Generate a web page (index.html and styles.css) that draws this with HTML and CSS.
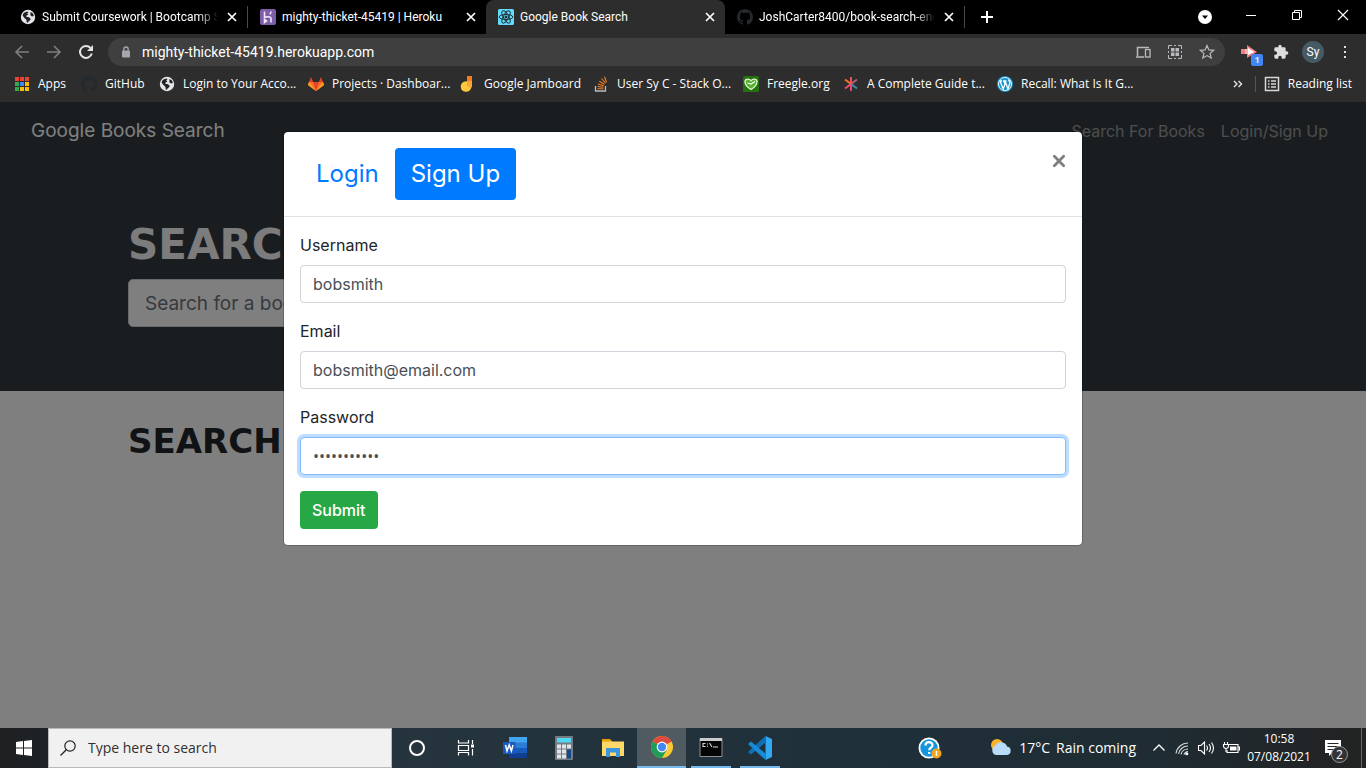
FILE: index.html
```html
<!DOCTYPE html>
<html lang="en">
<head>
<meta charset="utf-8">
<title>Google Book Search</title>
<meta name="viewport" content="width=device-width, initial-scale=1">
<link rel="stylesheet" href="styles.css">
</head>
<body>
<svg class="defs" aria-hidden="true">
  <symbol id="globe" viewBox="0 0 16 16"><circle cx="8" cy="8" r="7.2" fill="#e3e5e8"/><path d="M3.400 4.400C5 3 7 2.600 8.600 3L7.200 4.600l1.200 1-1.800 1-.4 1.200 2.800.4 1.800 1.800-1.200 1.800-1.200.6-.4 1.400-1.200-.4-.4-2.600-2-1.800-1.800-2.400z" fill="#202124"/><path d="M10.500 3l2.500 1.600.8 2.400-1.800.6-1.600-1.400z" fill="#202124"/></symbol>
  <symbol id="github" viewBox="0 0 16 16"><path fill="currentColor" d="M8 0C3.580 0 0 3.580 0 8c0 3.540 2.290 6.530 5.470 7.590.4.070.55-.17.55-.38 0-.19-.01-.82-.01-1.490-2.010.37-2.530-.49-2.690-.94-.09-.23-.48-.94-.82-1.130-.28-.15-.68-.52-.01-.53.63-.01 1.080.58 1.230.82.72 1.210 1.870.87 2.330.66.070-.52.28-.87.51-1.070-1.780-.2-3.640-.89-3.640-3.950 0-.87.31-1.590.82-2.150-.08-.2-.36-1.020.08-2.120 0 0 .67-.21 2.200.82a7.600 7.600 0 0 1 4 0c1.530-1.040 2.200-.82 2.200-.82.44 1.100.16 1.920.08 2.120.51.56.82 1.270.82 2.150 0 3.070-1.870 3.750-3.650 3.950.29.25.54.73.54 1.480 0 1.070-.01 1.930-.01 2.200 0 .21.15.46.55.38A8 8 0 0 0 16 8c0-4.420-3.580-8-8-8z"/></symbol>
  <symbol id="cross" viewBox="0 0 16 16"><path d="M4 4l8 8M12 4l-8 8" stroke="currentColor" stroke-width="1.700" fill="none"/></symbol>
</svg>

<header class="tabs">
  <div class="tab">
    <svg class="ico16"><use href="#globe"/></svg>
    <span class="tab-title">Submit Coursework | Bootcamp S</span>
    <button class="tab-close" aria-label="Close tab"><svg class="ico16"><use href="#cross"/></svg></button>
  </div>
  <div class="tab ruled">
    <svg class="ico16" viewBox="0 0 16 16"><rect width="16" height="16" rx="2" fill="#7d5ca8"/><path d="M4.500 2.500v6c2-1 6.500-1.500 6.500 1v4M4.500 10.500v3l2-1.500zM11 2.500c0 1.300-.5 2-1.200 2.800" fill="none" stroke="#efe6fa" stroke-width="1.600"/></svg>
    <span class="tab-title plain">mighty-thicket-45419 | Heroku</span>
    <button class="tab-close" aria-label="Close tab"><svg class="ico16"><use href="#cross"/></svg></button>
  </div>
  <div class="tab active">
    <svg class="ico16" viewBox="0 0 16 16"><rect width="16" height="16" rx="1.500" fill="#61dafb"/><g fill="none" stroke="#20343c" stroke-width="1"><ellipse cx="8" cy="8" rx="6.800" ry="2.600"/><ellipse cx="8" cy="8" rx="6.800" ry="2.600" transform="rotate(60 8 8)"/><ellipse cx="8" cy="8" rx="6.800" ry="2.600" transform="rotate(120 8 8)"/></g><circle cx="8" cy="8" r="1.500" fill="#20343c"/></svg>
    <span class="tab-title plain">Google Book Search</span>
    <button class="tab-close" aria-label="Close tab"><svg class="ico16"><use href="#cross"/></svg></button>
  </div>
  <div class="tab">
    <svg class="ico16 octo"><use href="#github"/></svg>
    <span class="tab-title">JoshCarter8400/book-search-eng</span>
    <button class="tab-close" aria-label="Close tab"><svg class="ico16"><use href="#cross"/></svg></button>
  </div>
  <button class="new-tab" aria-label="New tab"><svg class="ico16" viewBox="0 0 16 16"><path d="M8 2v12M2 8h12" stroke="#fff" stroke-width="2"/></svg></button>
  <div class="window-controls">
    <button aria-label="Search tabs"><svg class="ico16" viewBox="0 0 16 16"><circle cx="8" cy="8" r="7" fill="#fff"/><path d="M5 6.500h6L8 10z" fill="#000"/></svg></button>
    <button aria-label="Minimise"><svg class="ico16" viewBox="0 0 16 16"><path d="M3 6.500h10" stroke="#fff"/></svg></button>
    <button aria-label="Restore"><svg class="ico16" viewBox="0 0 16 16"><path d="M3.500 3.500h7v7h-7zM5.500 3.500v-2h7v7h-2" fill="none" stroke="#fff"/></svg></button>
    <button aria-label="Close"><svg class="ico16" viewBox="0 0 16 16"><path d="M3 1l10 10M13 1L3 11" stroke="#fff" stroke-width="1.200"/></svg></button>
  </div>
</header>

<div class="toolbar">
  <button class="tool dim" aria-label="Back"><svg class="ico16" viewBox="0 0 16 16"><path d="M15 8H2M8 2L2 8l6 6" fill="none" stroke="currentColor" stroke-width="1.600"/></svg></button>
  <button class="tool dim" aria-label="Forward"><svg class="ico16" viewBox="0 0 16 16"><path d="M1 8h13M8 2l6 6-6 6" fill="none" stroke="currentColor" stroke-width="1.600"/></svg></button>
  <button class="tool" aria-label="Reload"><svg class="ico16" viewBox="0 0 16 16"><path d="M13.800 9.500A6 6 0 1 1 12.500 3.900" fill="none" stroke="currentColor" stroke-width="2"/><path d="M15 1v6H9z" fill="currentColor"/></svg></button>
  <div class="omnibox">
    <svg class="lock" viewBox="0 0 10 12"><rect x="1" y="4.500" width="8" height="7" rx="1" fill="#a4a7ab"/><path d="M2.800 5V3.200a2.200 2.200 0 0 1 4.400 0V5" fill="none" stroke="#a4a7ab" stroke-width="1.300"/></svg>
    <input class="address" type="text" aria-label="Address" value="mighty-thicket-45419.herokuapp.com">
    <svg class="ico16" viewBox="0 0 16 16"><path d="M2.500 12V3.500H14M1 13h8" fill="none" stroke="#b8babd" stroke-width="1.500"/><rect x="10.500" y="5.500" width="4.500" height="7.500" fill="none" stroke="#b8babd" stroke-width="1.300"/></svg>
    <svg class="ico16" viewBox="0 0 16 16"><path d="M1.500 5V1.500H5M11 1.500h3.500V5M14.500 11v3.500H11M5 14.500H1.500V11M7 1.500h2M7 14.500h2M1.500 7v2M14.500 7v2" fill="none" stroke="#b8babd"/><path d="M4 4h3.500v3.500H4zM8.500 4H12v3.500H8.500zM4 8.500h3.500V12H4zM8.500 8.500H12V12H8.500z" fill="#b8babd"/></svg>
    <svg class="ico16" viewBox="0 0 16 16"><path d="M8 1.500l1.900 4.400 4.800.4-3.600 3.100 1.100 4.700L8 11.600l-4.200 2.500 1.100-4.700-3.600-3.100 4.800-.4z" fill="none" stroke="#b8babd" stroke-width="1.200"/></svg>
  </div>
  <button class="tool ext" aria-label="Extension, 1 notification"><svg class="ico16" viewBox="0 0 16 16"><path d="M0 5h6V1l10 7-10 6v-4H0z" fill="#f47f83"/><path d="M7 4l6.500 4L7 11z" fill="#fff"/><path d="M4 5h3v5H4z" fill="#f5b3b5"/></svg><span class="badge">1</span></button>
  <button class="tool" aria-label="Extensions"><svg class="ico16" viewBox="0 0 24 24"><path fill="#dcdee0" d="M20.500 11H19V7a2 2 0 0 0-2-2h-4V3.500a2.500 2.500 0 0 0-5 0V5H4a2 2 0 0 0-2 2v3.800h1.500a2.700 2.700 0 0 1 0 5.400H2V20c0 1.100.9 2 2 2h3.800v-1.500a2.700 2.700 0 0 1 5.400 0V22H17a2 2 0 0 0 2-2v-4h1.500a2.500 2.500 0 0 0 0-5z"/></svg></button>
  <button class="avatar">Sy</button>
  <button class="tool" aria-label="Menu"><svg class="ico16" viewBox="0 0 16 16"><path d="M7 2h2v2H7zM7 7h2v2H7zM7 12h2v2H7z" fill="#e0e2e4"/></svg></button>
</div>

<nav class="bookmarks" aria-label="Bookmarks">
  <a href="#"><svg class="ico16" viewBox="0 0 16 16"><path fill="#ea4335" d="M1 1h4v4H1zM6 1h4v4H6zM11 1h4v4h-4z"/><path fill="#34a853" d="M1 6h4v4H1zM1 11h4v4H1z"/><path fill="#4285f4" d="M6 6h4v4H6z"/><path fill="#fbbc04" d="M11 6h4v4h-4zM6 11h4v4H6zM11 11h4v4h-4z"/><path d="M5.500 0v16M10.500 0v16M0 5.500h16M0 10.500h16" stroke="#2d2d2d"/></svg>Apps</a>
  <a href="#"><svg class="ico16 octo"><use href="#github"/></svg>GitHub</a>
  <a href="#"><svg class="ico16"><use href="#globe"/></svg>Login to Your Acco...</a>
  <a href="#"><svg class="ico16" viewBox="0 0 16 16"><path fill="#fc6d26" d="M8 15L0 9l1-3h14l1 3z"/><path fill="#e24329" d="M1 6l2-5 2.200 5zM15 6l-2-5-2.200 5zM5.200 6h5.600L8 15z"/><path fill="#fca326" d="M1 6L0 9l8 6zM15 6l1 3-8 6z"/></svg>Projects · Dashboar...</a>
  <a href="#"><svg class="ico16" viewBox="0 0 16 16"><circle cx="6" cy="10.500" r="5.300" fill="#fdc93b"/><path d="M7 0h5v10H7z" fill="#f57c20"/><path d="M7 5h5v5c0 1-.5 1.500-1 2L7 10z" fill="#fba43a"/></svg>Google Jamboard</a>
  <a href="#"><svg class="ico16" viewBox="0 0 16 16"><path d="M2.500 10v5h10v-5" fill="none" stroke="#bcbbbb" stroke-width="1.300"/><path d="M4.500 12.800h6M4.500 10.500l6 .7M5 8l5.800 1.700M6.300 5.200l5.200 3M8.500 2.500l4 4.500M11.500.8l2 5.500" stroke="#f48024" stroke-width="1.100"/></svg>User Sy C - Stack O...</a>
  <a href="#"><svg class="ico16" viewBox="0 0 16 16"><rect width="16" height="16" rx="1.500" fill="#27700f"/><path d="M8 13.500C4 11 2 8.500 2 5.700 2 2.800 6 2 8 4.700c2-2.700 6-1.900 6 1 0 2.800-2 5.300-6 7.800z" fill="#54b22d" stroke="#dff5d5" stroke-width="1.300"/><path d="M4.500 7l3.500 1 4-2.500" fill="none" stroke="#fff" stroke-width="1.200"/></svg>Freegle.org</a>
  <a href="#"><svg class="ico16" viewBox="0 0 16 16"><g fill="none" stroke-width="2"><path d="M8 8L2 3.500" stroke="#f4722b"/><path d="M8 8V1" stroke="#ef5350"/><path d="M8 8l6-4.500" stroke="#b65f7c"/><path d="M8 8l6 4.500" stroke="#3f8aa6"/><path d="M8 8v7" stroke="#e04c6c"/><path d="M8 8l-6 4.500" stroke="#e8506a"/></g></svg>A Complete Guide t...</a>
  <a href="#"><svg class="ico16" viewBox="0 0 16 16"><circle cx="8" cy="8" r="8" fill="#1793c9"/><circle cx="8" cy="8" r="6.500" fill="none" stroke="#e8f6fc" stroke-width="1"/><path d="M3 5l3.200 8L8 8 6.800 5M8 5l3 8 2-6.500c0-1.500-1.500-1.500-1.500-3M2.500 5H5M6 5h3.500" fill="none" stroke="#fff" stroke-width="1.300"/></svg>Recall: What Is It G...</a>
  <button class="more" aria-label="More bookmarks"><svg viewBox="0 0 10 10" class="ico10"><path d="M1 2l3 3-3 3M5.500 2l3 3-3 3" fill="none" stroke="#e4e6e8" stroke-width="1.400"/></svg></button>
  <a class="reading" href="#"><svg class="ico16" viewBox="0 0 16 16"><rect x="1.500" y="1.500" width="13" height="13" fill="none" stroke="#d6d8da" stroke-width="1.500"/><path d="M4 5h1.500M4 8h1.500M4 11h1.500M7 5h5M7 8h5M7 11h5" stroke="#d6d8da" stroke-width="1.400"/></svg>Reading list</a>
</nav>

<main class="viewport">
  <div class="site">
    <nav class="navbar">
      <a class="brand" href="#">Google Books Search</a>
      <div class="nav-links"><a href="#">Search For Books</a><a href="#">Login/Sign Up</a></div>
    </nav>
    <section class="hero">
      <div class="container">
        <h1>SEARCH</h1>
        <input class="book-search" type="text" aria-label="Search for a book" placeholder="Search for a book">
      </div>
    </section>
    <section class="container results"><h2>SEARCH</h2></section>
  </div>
  <div class="backdrop">
    <div class="modal" role="dialog" aria-modal="true" aria-label="Sign Up">
      <div class="modal-header">
        <div class="pills"><a href="#">Login</a><a class="selected" href="#">Sign Up</a></div>
        <button class="close" aria-label="Close"><svg viewBox="0 0 12 12"><path d="M2 2l8 8M10 2l-8 8" stroke="#7f7f7f" stroke-width="2.400" stroke-linecap="round"/></svg></button>
      </div>
      <form class="modal-body">
        <div class="field"><label for="username">Username</label><input id="username" type="text" value="bobsmith"></div>
        <div class="field"><label for="email">Email</label><input id="email" type="email" value="bobsmith@email.com"></div>
        <div class="field"><label for="password">Password</label><input id="password" class="focused" type="password" value="bobsmith123"></div>
        <button class="submit" type="button">Submit</button>
      </form>
    </div>
  </div>
</main>

<footer class="taskbar">
  <button class="start" aria-label="Start"><svg class="ico16" viewBox="0 0 16 16"><path d="M0 2l7-1v6.500H0zM8 .9L16 0v7.500H8zM0 8.500h7V15l-7-1zM8 8.500h8V16l-8-1z" fill="#fff"/></svg></button>
  <label class="finder">
    <svg class="ico16" viewBox="0 0 16 16"><circle cx="10" cy="6" r="5.200" fill="none" stroke="#222" stroke-width="1.200"/><path d="M6.300 9.700L.5 15.500" stroke="#222" stroke-width="1.300"/></svg>
    <input type="text" aria-label="Search" placeholder="Type here to search">
  </label>
  <div class="apps">
    <button aria-label="Cortana"><svg class="ico24" viewBox="0 0 24 24"><circle cx="12" cy="12" r="7" fill="none" stroke="#fff" stroke-width="2"/></svg></button>
    <button aria-label="Task view"><svg class="ico24" viewBox="0 0 24 24"><path d="M4.500 4v3h10V4M4.500 19.500v-3h10v3M4.500 9.500h10v5h-10zM18.500 4v4M18.500 13v6.500" fill="none" stroke="#fff" stroke-width="1.200"/><path d="M17 8.500h3v3h-3z" fill="#fff"/></svg></button>
    <button aria-label="Word"><svg class="ico24" viewBox="0 0 24 24"><path d="M6 1h18v6H6z" fill="#41a5ee"/><path d="M6 6.500h18v5.500H6z" fill="#2b7cd3"/><path d="M6 12h18v5.500H6z" fill="#185abd"/><path d="M6 17.500h18V22H6z" fill="#103f91"/><rect y="6" width="12.500" height="12" rx="1" fill="#185abd"/><path d="M2.500 9l1.500 6 2.200-6 2.200 6L10 9" fill="none" stroke="#fff" stroke-width="1.500"/></svg></button>
    <button aria-label="Calculator"><svg class="ico24" viewBox="0 0 24 24"><rect x="3" y="0" width="18" height="24" rx="1" fill="#737b83"/><path d="M5 2h14v4.500H5z" fill="#4fd7f5"/><path d="M5 8.500h4v4H5zM10 8.500h4v4h-4zM15 8.500h4v4h-4zM5 13.500h4v4H5zM10 13.500h4v4h-4zM5 18.500h4v4H5zM10 18.500h4v4h-4z" fill="#dfe5e9"/><path d="M15 13.500h4v9h-4z" fill="#134a87"/></svg></button>
    <button aria-label="File Explorer"><svg class="ico24" viewBox="0 0 24 24"><path d="M1 3h8l2 2v3H1z" fill="#e8a200"/><path d="M1 5.500h22V20H1z" fill="#ffd868"/><path d="M5 21v-9h14v9h-4v-4.500H9V21z" fill="#3a96dd"/></svg></button>
    <button class="current" aria-label="Chrome"><svg class="ico24" viewBox="0 0 24 24"><circle cx="12" cy="12" r="11" fill="#fbc936"/><path d="M12 12L2.470 6.500A11 11 0 0 1 21.500 6.500z" fill="#dd4b3e"/><path d="M12 1a11 11 0 0 1 9.530 5.500H12z" fill="#dd4b3e"/><path d="M2.470 6.500A11 11 0 0 0 12 23l4.800-8.300L12 12z" fill="#1f9d58"/><circle cx="12" cy="12" r="5.400" fill="#fff"/><circle cx="12" cy="12" r="4.200" fill="#4588f1"/></svg></button>
    <button class="running" aria-label="Command Prompt"><svg class="ico24" viewBox="0 0 24 24"><path d="M1 2.500h22v18H1z" fill="#050505" stroke="#8d9295"/><path d="M1 2h22v3H1z" fill="#c9cdd0"/><path d="M6.500 7.500H4v3h2.500M8.500 7.500v1M8.500 9.800v1M10.500 7l2.500 4M14 11h5" fill="none" stroke="#d8d8d8" stroke-width="1.100"/></svg></button>
    <button class="running" aria-label="Visual Studio Code"><svg class="ico24" viewBox="0 0 24 24"><path d="M17.500 0L24 3v18l-6.500 3z" fill="#31a8f2"/><path d="M17.500 0v6.500L3 18.500 0 16z" fill="#0f6fb5"/><path d="M17.500 24v-6.500L3 5.500 0 8z" fill="#168bd6"/></svg></button>
  </div>
  <div class="tray">
    <button class="help" aria-label="Help"><svg class="ico24" viewBox="0 0 24 24"><circle cx="11" cy="12" r="10.500" fill="#fff"/><circle cx="11" cy="12" r="8.700" fill="#1795dc"/><path d="M7.500 9.500c0-4.500 7-4.500 7-.3 0 2.600-3.300 2.500-3.300 5M11.200 16v2" fill="none" stroke="#fff" stroke-width="2.200"/><circle cx="18.500" cy="17.500" r="5" fill="#f2a51d"/><path d="M18.500 15v5" stroke="#fff" stroke-width="1.500"/></svg></button>
    <button class="weather"><svg class="ico24" viewBox="0 0 24 24"><circle cx="8" cy="9" r="6" fill="#f9b32a"/><path d="M7 19a5 5 0 0 1-.5-9.500A6.300 6.300 0 0 1 18 10.500 4.300 4.300 0 0 1 18 19z" fill="#b9dbfa"/></svg><span>17°C</span><span>Rain coming</span></button>
    <button aria-label="Show hidden icons"><svg class="ico16" viewBox="0 0 16 16"><path d="M2.500 10.500L8 5l5.500 5.500" fill="none" stroke="#fff" stroke-width="1.300"/></svg></button>
    <button aria-label="Network"><svg class="ico16" viewBox="0 0 16 16"><g fill="none" stroke="#d5dadd" stroke-width="1.100"><path d="M2 13.500A12 12 0 0 1 14 3M4.500 14A9.500 9.500 0 0 1 14 6M7 14.500A7 7 0 0 1 14 9M10 14.500a4.500 4.500 0 0 1 4-3"/></g><circle cx="12.800" cy="13.800" r="1.500" fill="#fff"/></svg></button>
    <button aria-label="Volume"><svg class="ico18" viewBox="0 0 18 16"><path d="M1.500 5.500H4L7.500 2v12L4 10.500H1.500zM9.500 5.500q2 2.500 0 5M12 4q3 4 0 8M14.500 2.500q4 5.500 0 11" fill="none" stroke="#fff" stroke-width="1.100"/></svg></button>
    <button aria-label="Battery"><svg class="ico18" viewBox="0 0 18 16"><path d="M7 4.500h9v8H5V10M16 7h1.500v3H16" fill="none" stroke="#fff" stroke-width="1.100"/><path d="M8 6.500h6.500v4H8z" fill="#fff"/><path d="M1.500 4.500h5v2q-.5 2-2.500 2t-2.500-2zM2.500 2v2.500M5.500 2v2.500M4 8.500V12" fill="#222c33" stroke="#fff" stroke-width="1.100"/></svg></button>
    <button class="clock"><span>10:58</span><span>07/08/2021</span></button>
    <button class="notes" aria-label="2 notifications"><svg class="ico24" viewBox="0 0 24 24"><path d="M1 4h16v13H8l-3 3v-3H1z" fill="#fff"/><path d="M3.500 7.500h11M3.500 10.500h11M3.500 13.500h6" stroke="#24292d" stroke-width="1.200"/></svg><span class="count">2</span></button>
    <span class="peek"></span>
  </div>
</footer>
</body>
</html>
```
FILE: styles.css
```css
* { box-sizing: border-box; }
body {
  margin: 0;
  min-height: 100vh;
  display: flex;
  flex-direction: column;
  font: 12px/16px "Open Sans", "Noto Sans", sans-serif;
  color: #fff;
  background: #2d2d2d;
}
button { margin: 0; padding: 0; border: 0; background: none; color: inherit; font: inherit; }
input { font: inherit; min-width: 0; }
a { color: inherit; text-decoration: none; }
svg { display: block; flex: none; }
.defs { position: absolute; width: 0; height: 0; }
.ico10 { width: 10px; height: 10px; }
.ico16 { width: 16px; height: 16px; }
.ico18 { width: 18px; height: 16px; }
.ico24 { width: 24px; height: 24px; }
.octo { color: #24292e; }

/* Tab strip */
.tabs { display: flex; height: 34px; padding-left: 8px; background: #000; font-family: Roboto, sans-serif; }
.tab { display: flex; align-items: center; gap: 6px; flex: 0 1 239px; min-width: 0; padding: 0 7px 0 12px; }
.ruled, .new-tab { border-left: 1px solid #4a4a4a; border-image: linear-gradient(transparent 7px, #4a4a4a 7px 27px, transparent 27px) 1; }
.active { background: #2d2d2d; border-radius: 8px 8px 0 0; }
.tab-title {
  flex: 1;
  min-width: 0;
  overflow: hidden;
  white-space: nowrap;
  mask-image: linear-gradient(to right, #000 calc(100% - 20px), transparent);
}
.plain { mask-image: none; }
.new-tab { padding: 0 14px; }
.window-controls { display: flex; margin-left: auto; }
.window-controls button { display: grid; place-items: center; width: 46px; }

/* Address bar */
.toolbar { display: flex; align-items: center; height: 36px; padding-right: 5px; }
.tool { display: grid; place-items: center; width: 32px; height: 28px; color: #e3e5e7; }
.tool:first-child { margin-left: 6px; }
.dim { color: #7d7f81; }
.omnibox { display: flex; flex: 1; align-items: center; gap: 16px; height: 28px; margin: 0 8px 0 6px; padding: 0 10px 0 13px; border-radius: 14px; background: #3f3f3f; }
.lock { width: 10px; height: 12px; }
.address { flex: 1; padding: 0; margin-left: -5px; border: 0; background: none; color: #fff; font-family: Roboto, sans-serif; font-size: 14px; outline: 0; }
.ext { position: relative; }
.badge { position: absolute; right: 2px; bottom: 0; width: 12px; height: 12px; border-radius: 2px; background: #4285f4; font: bold 9px/12px "Open Sans", sans-serif; }
.avatar { width: 22px; height: 22px; margin: 0 5px; border-radius: 50%; background: #455a64; font-family: Roboto, sans-serif; }

/* Bookmarks bar */
.bookmarks {
  display: grid;
  grid-template-columns: 67px 78px 149px 152px 133px 150px 100px 154px 1fr auto auto;
  align-items: center;
  height: 32px;
  padding: 0 14px;
  padding-bottom: 4px;
}
.bookmarks a { display: flex; align-items: center; gap: 8px; white-space: nowrap; }
.more { padding: 0 12px; }
.bookmarks .reading { padding-left: 8px; border-left: 1px solid #555; }

/* Web page */
.viewport { position: relative; flex: 1; display: flex; flex-direction: column; font: 16px/24px Inter, Roboto, sans-serif; color: #212529; background: #fff; overflow: hidden; }
.site { flex: 1; }
.navbar { display: flex; align-items: center; justify-content: space-between; height: 58px; padding: 0 38px 0 31px; background: #343a40; color: #fff; }
.brand { font-size: 19px; }
.nav-links { display: flex; gap: 16px; color: rgba(255, 255, 255, .5); }
.container { width: 100%; max-width: 1140px; margin: 0 auto; padding: 0 15px; }
.hero { padding: 60px 0 64px; background: #343a40; }
h1, h2 { margin: 0; font-weight: 700; font-family: "DejaVu Sans", sans-serif; }
h1 { margin-bottom: 9px; font-size: 42px; line-height: 50px; color: #f8f9fa; }
h2 { font-size: 34px; line-height: 40px; }
.results { padding-top: 30px; }
.book-search { display: block; width: 66%; height: 48px; padding: 8px 16px; border: 1px solid #ced4da; border-radius: 5px; background: #fff; font-size: 19px; }
.book-search::placeholder { color: #6c757d; opacity: 1; }
.backdrop { position: absolute; inset: 0; padding: 29px 16px; background: rgba(0, 0, 0, .5); }

/* Dialog */
.modal { max-width: 800px; margin: 0 auto; border: 1px solid rgba(0, 0, 0, .2); border-radius: 5px; background: #fff; background-clip: padding-box; }
.modal-header { display: flex; align-items: flex-start; justify-content: space-between; padding: 16px; border-bottom: 1px solid #dee2e6; }
.pills { display: flex; font-size: 24px; line-height: 36px; color: #007bff; }
.pills a { padding: 8px 16px; border-radius: 4px; }
.pills .selected { background: #007bff; color: #fff; }
.close { padding: 6px 0; }
.close svg { width: 14px; height: 14px; }
.modal-body { padding: 16px; }
.field { margin-bottom: 16px; }
.field label { display: block; margin-bottom: 8px; }
.field input { display: block; width: 100%; height: 38px; padding: 6px 12px; border: 1px solid #ced4da; border-radius: 4px; background: #fff; color: #495057; outline: 0; }
.field .focused { border-color: #80bdff; box-shadow: 0 0 0 3px rgba(0, 123, 255, .25); font-family: "Open Sans", sans-serif; }
.submit { height: 38px; padding: 0 12px; border-radius: 4px; background: #28a745; color: #fff; font-weight: 500; }

/* Taskbar */
.taskbar { display: flex; height: 40px; background: linear-gradient(to right, #1e2022, #25343d 30%, #1f2f39 65%, #1f2c33 85%, #222); font-size: 14px; }
.start { display: grid; place-items: center; width: 48px; }
.finder { display: flex; align-items: center; gap: 12px; width: 344px; padding: 0 11px; border: 1px solid #b9b9b9; background: #f1f1f1; }
.finder input { flex: 1; padding: 0; border: 0; background: none; outline: 0; }
.finder input::placeholder { color: #303030; opacity: 1; }
.apps { display: flex; }
.apps button { display: grid; place-items: center; width: 49px; }
.apps .current { background: #4f5a61; border-bottom: 2px solid #76b9ed; }
.apps .running { background: linear-gradient(#76b9ed, #76b9ed) center bottom / 40px 2px no-repeat; }
.tray { display: flex; align-items: center; margin-left: auto; gap: 7px; }
.help { margin-right: 40px; }
.weather { display: flex; align-items: center; gap: 6px; margin-right: 8px; white-space: nowrap; }
.clock { display: flex; flex-direction: column; width: 64px; font-size: 12px; line-height: 18px; text-align: center; }
.notes { position: relative; width: 30px; margin-left: 6px; }
.count { position: absolute; left: 7px; top: 10px; width: 17px; height: 17px; border: 1px solid #999; border-radius: 50%; background: #333; font-size: 12px; line-height: 15px; text-align: center; }
.peek { align-self: stretch; width: 5px; border-left: 1px solid #666; }
```
